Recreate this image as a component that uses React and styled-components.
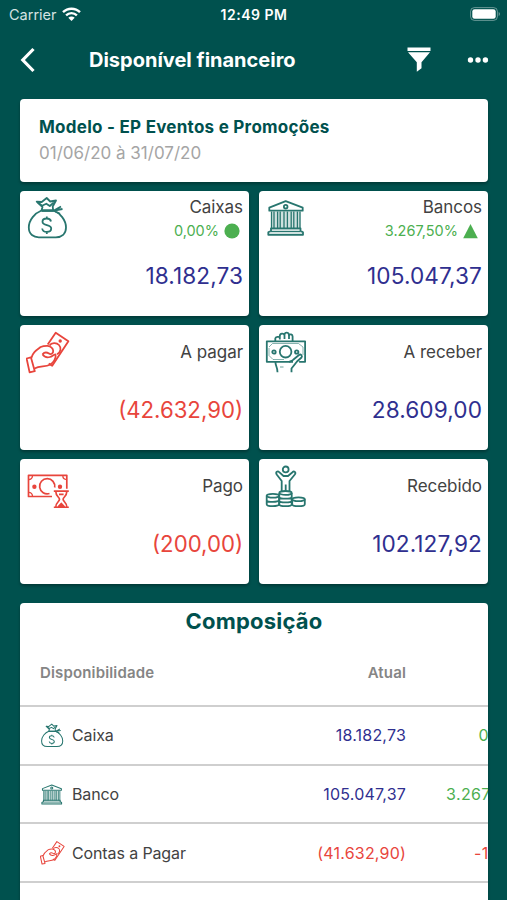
import React from "react";
import styled, { createGlobalStyle } from "styled-components";

const GREEN = "#00514e";
const BLUE = "#2f2f8f";
const RED = "#e8453c";
const UP = "#4caf50";

const GlobalStyle = createGlobalStyle`
  * {
    box-sizing: border-box;
  }
  body {
    margin: 0;
    background: ${GREEN};
    font-family: Inter, "Liberation Sans", sans-serif;
    overflow: hidden;
  }
`;

function BagIcon() {
  return (
    <>
      <path d="M15.500 14.500C9 17 2.800 24 2.800 31.500c0 7 5 9.800 10 9.800h17c6 0 10.200-3.500 10.200-9.800 0-7.500-6-14.500-12.500-17z" />
      <path d="M15.500 14.500l1-3.500-5.800-5.300 5 .3 5-4 3.500 3.500 5.800-1-3.300 6 .5 4z" />
      <path d="M12 6.500l4 3.200 4.300-2 3.500 2.300 4-3.500M16 14.800h11.500l7.500-4.300M28 14.500l8.500-1.500M28.500 15l5.500 2.800" />
      <path d="M25 25.500c-.4-2-2-3-4.300-3-2.500 0-4.200 1.200-4.200 3.200 0 4.600 8.700 2.300 8.700 6.800 0 2.200-1.800 3.400-4.400 3.400-2.600 0-4.300-1.200-4.600-3.400M20.800 20.500v2M20.800 36v2" />
    </>
  );
}

function BankIcon() {
  return (
    <>
      <path
        fill="currentColor"
        fillOpacity=".22"
        stroke="none"
        d="M6 16h29.500v16.500H6zM6 33h29.500l2.500 5.500H3.500z"
      />
      <path d="M20.700 5.200L4.300 11.700v3h33.400v-3zM3.300 38.800v-2.600l2.700-1.400v-2.500h29.500v2.500l2.500 1.400v2.600z" />
      <path strokeWidth="1" d="M6 35.500h29.500" />
      <circle cx="20.700" cy="10.700" r="1.800" />
      <path
        strokeWidth="1.300"
        d="M6.500 15.500v17M9 15.500v17M12.600 15.500v17M15.200 15.500v17M19 15.500v17M22.400 15.500v17M26.200 15.500v17M28.800 15.500v17M32.400 15.500v17M35 15.500v17"
      />
    </>
  );
}

function PayIcon() {
  return (
    <>
      <path d="M.6 28.500l4.300-1.200L8.800 41.200l-5.200 1.200z" />
      <path d="M5.300 28c1.500-5.500 4.700-7.500 9.400-11 2.500-1.200 4.500-1.300 7-1.200 2.500.5 5.300 2.500 5.500 5 .2 3-2.500 4-4.200 2.700-2.500-1.500-5-1-6.500.8" />
      <path d="M16.500 24.300c1.500 2.400 4.500 3.500 7.500 2.700 2-.5 3.500-2.500 5.500-2.700 1 3.500-2 8.500-5.500 10.500-5 2.500-10 .8-15.500 3.700" />
      <path d="M21.700 14.500l8-11.700 12.700 8.500-16.200 24.500-3.500-2.300" />
      <path d="M23.500 15.500c2-3 7-3.200 9.500-.5s2 7.500-2 9.300" />
      <circle cx="34.200" cy="11" r=".8" />
    </>
  );
}

function ReceiveIcon() {
  return (
    <>
      <path d="M28 31.800H1.800V11.300h38.300v20.500h-6" />
      <circle cx="20.600" cy="21.700" r="5.800" />
      <circle cx="9" cy="22" r="1.700" />
      <circle cx="31.700" cy="22" r="1.700" />
      <path strokeWidth=".8" strokeOpacity=".7" d="M4 18v7.500l4 4h11M4 17l3.500-3.500h26L38 17v8" />
      <path d="M10.300 11V8.500c.3-2 3.700-2 4.500-1.200V6c0-3 4.200-3 4.700-.7V4.500c.4-2.500 4-2.500 4.400 0v1c1-2 3.700-1.200 3.700 1V11M14.800 7v2.500M19.500 5.500V9M24 5.500V9" />
      <path d="M10.500 32c-.3 4 2 4.500 2 10.200M26.500 42.200v-3.700l5.500-7 4.500-4c1.300-2-.8-3.700-2.500-2.500l-5.500 4.500c-1 1.500-3 1.500-4.500 2.500" />
      <path strokeWidth=".7" d="M15 37h3.500" />
    </>
  );
}

function PaidIcon() {
  return (
    <>
      <path strokeWidth="1.700" d="M26 32.500H2.500V11.300h38.300v13.500" />
      <path strokeWidth="1.300" d="M2.500 15.500c2.500 0 4-1.500 4-4M2.500 28.300c2.500 0 4 1.500 4 4M40.800 15.500c-2.500 0-4-1.500-4-4" />
      <path strokeWidth="1.700" d="M23.500 29.500a7.600 7.600 0 1 1 5.200-6" />
      <circle cx="8.400" cy="22.700" r="1.300" fill="currentColor" />
      <circle cx="34" cy="22.700" r="1.300" fill="currentColor" />
      <path strokeWidth="1.700" d="M27.800 27.200h15M27.800 43.300h15M29.800 27.500c0 5 3.700 5.500 3.700 7.800 0 2.300-3.700 3-3.700 7.700M40.800 27.500c0 5-3.700 5.500-3.700 7.800 0 2.300 3.700 3 3.700 7.700M33 30.300h4.600" />
      <path fill="currentColor" d="M32.500 42.500l2.800-3 2.800 3z" />
    </>
  );
}

function ReceivedIcon() {
  return (
    <>
      <circle cx="20.700" cy="5.400" r="2.900" />
      <path d="M16.700 27.500V17l-5-6.500c-1.500-2.500 1-4 2.500-2.300l4.300 3.800h4.500l4.500-3.800c1.500-1.700 3.900 0 2.300 2.300L24.500 17v10.500M20.700 20.500v7" />
      <ellipse cx="7.900" cy="31.700" rx="6.200" ry="1.900" />
      <path d="M1.700 31.700v8.500c0 2.600 12.400 2.600 12.400 0v-8.500M1.700 36c0 2.600 12.400 2.600 12.400 0" />
      <ellipse cx="20.500" cy="28.900" rx="6.200" ry="1.900" />
      <path d="M14.300 29v11.200c0 2.600 12.400 2.600 12.400 0V29M14.300 32.700c0 2.600 12.400 2.600 12.400 0M14.300 36.500c0 2.600 12.400 2.600 12.400 0" />
      <ellipse cx="33.500" cy="35.300" rx="6.300" ry="1.900" />
      <path d="M27.200 35.300v4.900c0 2.600 12.600 2.600 12.600 0v-4.900" />
    </>
  );
}

const cards = [
  { title: "Caixas", value: "18.182,73", rate: "0,00%", shape: "dot", icon: <BagIcon /> },
  { title: "Bancos", value: "105.047,37", rate: "3.267,50%", shape: "up", icon: <BankIcon /> },
  { title: "A pagar", value: "(42.632,90)", negative: true, icon: <PayIcon /> },
  { title: "A receber", value: "28.609,00", icon: <ReceiveIcon /> },
  { title: "Pago", value: "(200,00)", negative: true, icon: <PaidIcon /> },
  { title: "Recebido", value: "102.127,92", icon: <ReceivedIcon /> },
];

const rows = [
  { label: "Caixa", value: "18.182,73", rate: "0,00%", icon: <BagIcon /> },
  { label: "Banco", value: "105.047,37", rate: "3.267,50%", icon: <BankIcon /> },
  { label: "Contas a Pagar", value: "(41.632,90)", rate: "-1,00%", negative: true, icon: <PayIcon /> },
];

function App() {
  return (
    <>
      <GlobalStyle />
      <Screen>
        <StatusBar>
          <Carrier>
            Carrier
            <svg width="19" height="14" viewBox="0 0 19 14" fill="none" stroke="#fff" strokeWidth="2.400">
              <path d="M1 5.200C5.700.6 13.300.6 18 5.200M4.100 8.300c3-2.900 7.800-2.900 10.800 0" />
              <path d="M6.300 10.700c1.800-1.700 4.600-1.700 6.400 0L9.500 13.900z" fill="#fff" stroke="none" />
            </svg>
          </Carrier>
          <Clock>12:49 PM</Clock>
          <Battery>
            <svg width="31" height="14" viewBox="0 0 31 14">
              <rect x=".6" y=".6" width="26.800" height="12.800" rx="3.800" fill="none" stroke="#fff" strokeOpacity=".4" />
              <rect x="2.300" y="2.300" width="23.400" height="9.400" rx="2.300" fill="#fff" />
              <path d="M28.700 5c1.600.5 1.600 3.500 0 4z" fill="#fff" fillOpacity=".45" />
            </svg>
          </Battery>
        </StatusBar>

        <NavBar>
          <svg width="16" height="26" viewBox="0 0 16 26" fill="none" stroke="#fff" strokeWidth="3.200">
            <path d="M13.500 2L2.800 13l10.700 11" />
          </svg>
          <NavTitle>Disponível financeiro</NavTitle>
          <svg width="24" height="25" viewBox="0 0 24 25" fill="#fff">
            <path d="M.5.500h23v3.400H.5zM1 5.300h22l-8.500 10v6L9.800 24.700V15.300z" />
          </svg>
          <Dots width="22" height="6" viewBox="0 0 22 6" fill="#fff">
            <circle cx="3.500" cy="3" r="2.700" />
            <circle cx="11" cy="3" r="2.700" />
            <circle cx="18.400" cy="3" r="2.700" />
          </Dots>
        </NavBar>

        <Content>
          <Company>
            <CompanyName>Modelo - EP Eventos e Promoções</CompanyName>
            <Period>01/06/20 à 31/07/20</Period>
          </Company>

          <CardGrid>
            {cards.map((card) => (
              <Card key={card.title}>
                <LineIcon viewBox="0 0 44 44" $size={44} $negative={card.negative}>
                  {card.icon}
                </LineIcon>
                <CardInfo>
                  <CardTitle $low={!card.rate}>{card.title}</CardTitle>
                  {card.rate && (
                    <Rate>
                      {card.rate}
                      <svg width="16" height="16" viewBox="0 0 16 16" fill={UP}>
                        {card.shape === "dot" ? (
                          <circle cx="8" cy="8" r="7.600" />
                        ) : (
                          <path d="M7.500 1l7.300 14.200H.2z" />
                        )}
                      </svg>
                    </Rate>
                  )}
                  <Amount $negative={card.negative}>{card.value}</Amount>
                </CardInfo>
              </Card>
            ))}
          </CardGrid>

          <Panel>
            <PanelTitle>Composição</PanelTitle>
            <HeadRow>
              <span>Disponibilidade</span>
              <HeadValue>Atual</HeadValue>
            </HeadRow>
            {rows.map((row) => (
              <Row key={row.label}>
                <RowLabel>
                  <LineIcon viewBox="0 0 44 44" $size={25} $negative={row.negative}>
                    {row.icon}
                  </LineIcon>
                  {row.label}
                </RowLabel>
                <RowValue $negative={row.negative}>{row.value}</RowValue>
                <RowRate $negative={row.negative}>{row.rate}</RowRate>
              </Row>
            ))}
          </Panel>
        </Content>
      </Screen>
    </>
  );
}

const Screen = styled.div`
  width: 507px;
  height: 900px;
  overflow: hidden;
  background: ${GREEN};
  display: flex;
  flex-direction: column;
`;

const StatusBar = styled.div`
  height: 28px;
  flex: none;
  display: grid;
  grid-template-columns: 1fr auto 1fr;
  align-items: center;
  padding: 0 8px 0 9px;
  color: #fff;
`;

const Carrier = styled.div`
  display: flex;
  align-items: center;
  gap: 5px;
  font-size: 14.5px;
  color: #d5e3e2;
`;

const Clock = styled.div`
  font-size: 14px;
  font-weight: 600;
  letter-spacing: 0.5px;
`;

const Battery = styled.div`
  display: flex;
  justify-content: flex-end;
  margin-right: -2px;
`;

const NavBar = styled.div`
  height: 63px;
  flex: none;
  display: flex;
  align-items: center;
  padding: 0 18px 0 20px;
`;

const NavTitle = styled.h1`
  margin: 0 0 0 53px;
  flex: 1;
  color: #fff;
  font-size: 20px;
  font-weight: 700;
  line-height: 24px;
`;

const Dots = styled.svg`
  margin-left: 36px;
`;

const Content = styled.div`
  padding: 8px 19px 0 20px;
`;

const Surface = styled.div`
  background: #fff;
  border-radius: 4px;
  box-shadow: 0 2px 3px rgba(0, 0, 0, 0.3);
`;

const Company = styled(Surface)`
  height: 83px;
  padding: 16px 19px;
`;

const CompanyName = styled.div`
  color: ${GREEN};
  font-size: 17px;
  font-weight: 650;
  line-height: 24px;
  letter-spacing: 0.26px;
`;

const Period = styled.div`
  color: #a5a5a5;
  font-size: 17px;
  line-height: 28px;
`;

const CardGrid = styled.div`
  display: grid;
  grid-template-columns: 229px 229px;
  grid-auto-rows: 125px;
  gap: 9px 10px;
  margin-top: 9px;
`;

const Card = styled(Surface)`
  display: flex;
  justify-content: space-between;
  padding: 5px 6px;
`;

const LineIcon = styled.svg`
  width: ${(props) => props.$size}px;
  height: ${(props) => props.$size}px;
  flex: none;
  fill: none;
  stroke: currentColor;
  stroke-width: 1.8;
  stroke-linejoin: round;
  color: ${(props) => (props.$negative ? RED : "#28766f")};
`;

const CardInfo = styled.div`
  display: flex;
  flex-direction: column;
  align-items: flex-end;
`;

const CardTitle = styled.div`
  color: #424242;
  font-size: 17px;
  line-height: 22px;
  letter-spacing: -0.05px;
  margin-top: ${(props) => (props.$low ? "11px" : "0")};
`;

const Rate = styled.div`
  display: flex;
  align-items: center;
  gap: 5px;
  padding-right: 3px;
  margin-top: 2px;
  color: ${UP};
  font-size: 14.5px;
  line-height: 22px;
`;

const Amount = styled.div`
  color: ${(props) => (props.$negative ? RED : BLUE)};
  font-size: ${(props) => (props.$negative ? "22.2px" : "22.6px")};
  letter-spacing: ${(props) => (props.$negative ? "0" : "0.1px")};
  line-height: 28px;
  margin-top: auto;
  margin-bottom: 21px;
`;

const Panel = styled(Surface)`
  margin-top: 19px;
  height: 340px;
  overflow: hidden;
`;

const PanelTitle = styled.h2`
  margin: 0;
  color: ${GREEN};
  font-size: 22px;
  font-weight: 650;
  line-height: 37px;
  letter-spacing: 0.2px;
  text-align: center;
`;

const Row = styled.div`
  width: 510px;
  height: 58.7px;
  display: grid;
  grid-template-columns: 246px 100px 104px;
  column-gap: 20px;
  align-items: center;
  padding-left: 20px;
  border-bottom: 2px solid #cfcfcf;
  font-size: 16px;
`;

const HeadRow = styled(Row)`
  height: 67px;
  color: #858585;
  font-size: 15px;
  font-weight: 600;
  letter-spacing: 0.15px;
`;

const HeadValue = styled.span`
  text-align: right;
`;

const RowLabel = styled.div`
  display: flex;
  align-items: center;
  gap: 7px;
  color: #424242;
  letter-spacing: -0.12px;
`;

const RowValue = styled.div`
  text-align: right;
  letter-spacing: 0.2px;
  color: ${(props) => (props.$negative ? RED : BLUE)};
`;

const RowRate = styled.div`
  text-align: right;
  letter-spacing: 0.35px;
  color: ${(props) => (props.$negative ? RED : UP)};
`;

export default App;
